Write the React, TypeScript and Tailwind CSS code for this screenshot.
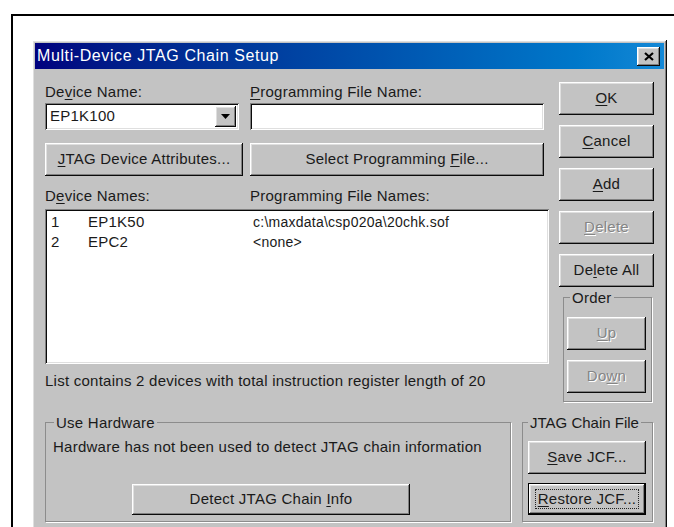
import {ReactElement, ReactNode} from 'react';

const raised = 'bg-[#c3c3c3] shadow-[inset_-1px_-1px_#0a0a0a,inset_1px_1px_#ffffff,inset_-2px_-2px_#808080,inset_2px_2px_#dfdfdf]';
const sunken = 'bg-white shadow-[inset_1px_1px_#808080,inset_-1px_-1px_#ffffff,inset_2px_2px_#0a0a0a,inset_-2px_-2px_#dfdfdf]';
const greyed = 'text-[#858585] [text-shadow:1px_1px_0_#ffffff]';

function K(props:{children:ReactNode}) : ReactElement {
  return <span className="underline underline-offset-2">{props.children}</span>;
}

function Btn(props:{children:ReactNode,className?:string,disabled?:boolean,isDefault?:boolean}) : ReactElement {
  const {children,className,disabled,isDefault} = props;
  const face = <div className={raised+' flex h-full w-full items-center justify-center'}>
    <span className={(disabled?greyed:'text-[#1a1a1a]')+(isDefault?' border border-dotted border-[#222] px-[2px] leading-[18px]':'')}>{children}</span>
  </div>;
  if(isDefault){
    return <div className={'border border-black '+(className||'')}>{face}</div>;
  }
  return <div className={className}>{face}</div>;
}

// etched frame with a caption on its top line
function Group(props:{title:string,className?:string,legendClass?:string,bodyClass?:string,children:ReactNode}) : ReactElement {
  const {title,className,legendClass,bodyClass,children} = props;
  return <fieldset className={'border border-[#8c8c8c] shadow-[1px_1px_0_#ffffff] '+(className||'')}>
    <legend className={'whitespace-nowrap px-[2px] leading-[17px] text-[#1a1a1a] '+(legendClass||'')}>{title}</legend>
    <div className={bodyClass}>{children}</div>
  </fieldset>;
}

const devices = [
  {no:'1',name:'EP1K50',file:'c:\\maxdata\\csp020a\\20chk.sof'},
  {no:'2',name:'EPC2',file:'<none>'},
];

export default function App() : ReactElement {
  return <div className="h-[527px] w-[674px] overflow-hidden bg-white pl-[11px] pt-[14px] font-['Liberation_Sans',Arial,sans-serif] text-[15px] tracking-[0.25px]">
    <div className="h-[600px] border-l-2 border-t-2 border-black pl-[19px] pt-[24px]">
      <div className={raised+' h-[560px] w-[635px] p-[3px]'}>
        {/* caption */}
        <div className="flex h-[26px] items-center justify-between bg-gradient-to-r from-[#00007e] to-[#1388d6] pl-[2px] pr-[4px]">
          <span className="text-[16px] leading-none tracking-[0.6px] text-white">Multi-Device JTAG Chain Setup</span>
          <div className={raised+' flex h-[19px] w-[23px] items-center justify-center'}>
            <svg width="10" height="9" viewBox="0 0 10 9"><path d="M1 1 L9 8 M9 1 L1 8" stroke="#000" strokeWidth="2.2"/></svg>
          </div>
        </div>

        <div className="pl-[10px] pr-[10px] pt-[13px]">
          <div className="flex">
            {/* left side */}
            <div className="w-[503px]">
              <div className="flex h-[21px] leading-[17px] text-[#1a1a1a]">
                <div className="w-[205px] pt-[1px]">De<K>v</K>ice Name:</div>
                <div className="pt-[1px]"><K>P</K>rogramming File Name:</div>
              </div>
              <div className="flex h-[27px]">
                <div className={sunken+' flex w-[194px] items-center justify-between pl-[5px] pr-[3px]'}>
                  <span className="text-[#1a1a1a]">EP1K100</span>
                  <div className={raised+' flex h-[21px] w-[21px] items-center justify-center'}>
                    <svg width="9" height="5" viewBox="0 0 9 5"><path d="M0 0 H9 L4.5 5 Z" fill="#000"/></svg>
                  </div>
                </div>
                <div className={sunken+' ml-[11px] w-[294px]'}></div>
              </div>
              <div className="mt-[13px] flex h-[33px]">
                <Btn className="w-[198px]"><K>J</K>TAG Device Attributes...</Btn>
                <Btn className="ml-[7px] w-[294px]">Select Programming <K>F</K>ile...</Btn>
              </div>
              <div className="mt-[11px] flex h-[22px] leading-[17px] text-[#1a1a1a]">
                <div className="w-[205px]">D<K>e</K>vice Names:</div>
                <div>Programming File Names:</div>
              </div>
              <div className={sunken+' h-[155px] w-[504px] pl-[6px] pt-[3px]'}>
                {devices.map(function(d){
                  return <div key={d.no} className="flex h-[20px] items-center text-[#1a1a1a]">
                    <span className="w-[37px]">{d.no}</span>
                    <span className="w-[165px]">{d.name}</span>
                    <span className="text-[14px]">{d.file}</span>
                  </div>;
                })}
              </div>
              <div className="mt-[8px] leading-[17px] text-[#1a1a1a]">List contains 2 devices with total instruction register length of 20</div>
            </div>

            {/* right side */}
            <div className="ml-[11px] flex w-[95px] flex-col">
              <Btn className="h-[33px]"><K>O</K>K</Btn>
              <Btn className="mt-[10px] h-[33px]"><K>C</K>ancel</Btn>
              <Btn className="mt-[10px] h-[33px]"><K>A</K>dd</Btn>
              <Btn className="mt-[10px] h-[33px]" disabled={true}><K>D</K>elete</Btn>
              <Btn className="mt-[10px] h-[33px]">De<K>l</K>ete All</Btn>
              <Group title="Order" className="ml-[4px] mr-[2px] mt-[2px]" legendClass="ml-[6px]" bodyClass="pb-[8px] pl-[3px] pr-[5px] pt-[11px]">
                <Btn className="h-[33px]" disabled={true}><K>U</K>p</Btn>
                <Btn className="mt-[10px] h-[33px]" disabled={true}>Do<K>w</K>n</Btn>
              </Group>
            </div>
          </div>

          <div className="mt-[12px] flex">
            <Group title="Use Hardware" className="h-[108px] w-[466px]" legendClass="ml-[8px]" bodyClass="pl-[7px] pt-[7px]">
              <div className="leading-[17px] text-[#1a1a1a]">Hardware has not been used to detect JTAG chain information</div>
              <div className="mt-[29px] flex">
                <Btn className="ml-[79px] h-[31px] w-[278px]">Detect JTAG Chain <K>I</K>nfo</Btn>
              </div>
            </Group>
            <Group title="JTAG Chain File" className="ml-[11px] h-[108px] w-[131px]" legendClass="ml-[5px] tracking-normal" bodyClass="pl-[5px] pr-[6px] pt-[10px]">
              <Btn className="h-[33px]"><K>S</K>ave JCF...</Btn>
              <Btn className="mt-[9px] h-[32px]" isDefault={true}><K>R</K>estore JCF...</Btn>
            </Group>
          </div>
        </div>
      </div>
    </div>
  </div>;
}
